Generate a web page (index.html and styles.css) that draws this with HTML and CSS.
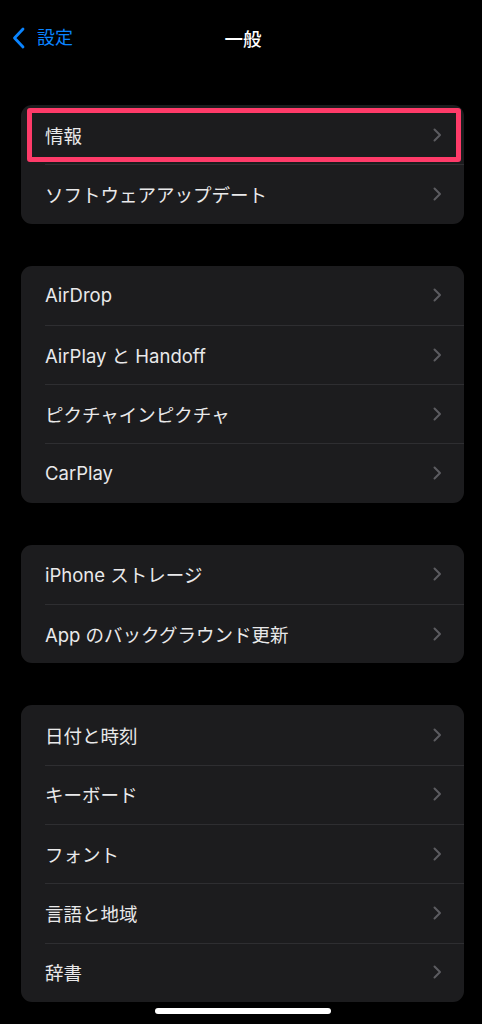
FILE: index.html
```html
<!DOCTYPE html>
<html lang="ja">
<head>
  <meta charset="UTF-8" />
  <meta name="viewport" content="width=device-width, initial-scale=1.0"/>
  <title>一般</title>
  <link rel="stylesheet" href="styles.css">
</head>
<body>
  <header class="nav">
    <a class="back" href="#">
      <svg class="back-icon" width="13" height="22" viewBox="0 0 13 22">
        <path d="M11 2 L2.5 11 L11 20" fill="none" stroke="#0a84ff" stroke-width="2.8" stroke-linecap="round" stroke-linejoin="round"/>
      </svg>
      <span>設定</span>
    </a>
    <h1 class="title">一般</h1>
  </header>

  <main class="content">
    <section class="group">
      <div class="row highlighted"><span>情報</span><i class="chev"></i></div>
      <div class="row"><span>ソフトウェアアップデート</span><i class="chev"></i></div>
    </section>

    <section class="group">
      <div class="row"><span>AirDrop</span><i class="chev"></i></div>
      <div class="row"><span>AirPlay と Handoff</span><i class="chev"></i></div>
      <div class="row"><span>ピクチャインピクチャ</span><i class="chev"></i></div>
      <div class="row"><span>CarPlay</span><i class="chev"></i></div>
    </section>

    <section class="group">
      <div class="row"><span>iPhone ストレージ</span><i class="chev"></i></div>
      <div class="row"><span>App のバックグラウンド更新</span><i class="chev"></i></div>
    </section>

    <section class="group">
      <div class="row"><span>日付と時刻</span><i class="chev"></i></div>
      <div class="row"><span>キーボード</span><i class="chev"></i></div>
      <div class="row"><span>フォント</span><i class="chev"></i></div>
      <div class="row"><span>言語と地域</span><i class="chev"></i></div>
      <div class="row"><span>辞書</span><i class="chev"></i></div>
    </section>
  </main>

  <div class="home-bar"></div>

  <script>
    // draw the gray chevron in every row
    document.querySelectorAll(".chev").forEach(el => {
      el.innerHTML = `
        <svg width="9" height="14" viewBox="0 0 9 14">
          <path d="M1.5 1.5 L7 7 L1.5 12.5" fill="none" stroke="#5c5c60" stroke-width="2" stroke-linecap="round" stroke-linejoin="round"/>
        </svg>`;
    });
  </script>
</body>
</html>
```

FILE: styles.css
```css
* {
  box-sizing: border-box;
}
body {
  margin: 0;
  background: #000;
  color: #e9e9ea;
  font-family: Inter, "Noto Sans CJK JP", sans-serif;
  height: 1024px;
  overflow: hidden;
  position: relative;
}
.nav {
  position: relative;
  height: 76px;
  display: flex;
  align-items: center;
  justify-content: center;
}
.back {
  position: absolute;
  left: 12px;
  top: 27px;
  display: flex;
  align-items: center;
  gap: 12px;
  color: #0a84ff;
  text-decoration: none;
  font-size: 18px;
  line-height: 22px;
}
.title {
  margin: 0 0 0 4px;
  font-size: 18.5px;
  font-weight: 500;
  color: #fff;
}
.content {
  padding: 29px 18px 0 21px;
  display: flex;
  flex-direction: column;
  gap: 42px;
}
.group {
  background: #1c1c1e;
  border-radius: 11px;
  overflow: hidden;
}
.row {
  position: relative;
  height: 59.3px;
  display: flex;
  align-items: center;
  justify-content: space-between;
  padding: 0 22px 0 24px;
  font-size: 18.5px;
}
.row + .row::before {
  content: "";
  position: absolute;
  top: 0;
  left: 24px;
  right: 0;
  height: 1px;
  background: #2e2e31;
}
.chev {
  display: flex;
}
.highlighted::after {
  content: "";
  position: absolute;
  left: 6px;
  right: 3px;
  top: 3px;
  bottom: 2px;
  border: 5px solid #fe3b69;
  border-radius: 3px;
}
.home-bar {
  position: absolute;
  left: 155px;
  top: 1008px;
  width: 176px;
  height: 6px;
  border-radius: 3px;
  background: #fff;
}
```
